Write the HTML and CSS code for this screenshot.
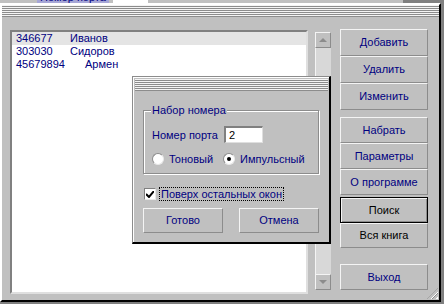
FILE: index.html
```html
<!DOCTYPE html>
<html lang="ru">
<head>
    <meta charset="UTF-8">
    <title>Телефонная книга</title>
    <link rel="stylesheet" href="styles.css">
</head>
<body>
    <div class="desk">
        <!-- кусочек окна на заднем плане -->
        <div class="behind">
            <span class="behind-label">Номер порта</span>
            <span class="behind-input"></span>
        </div>

        <div class="window">
            <div class="stripes"></div>
            <div class="client">
                <div class="listbox">
                    <div class="row sel"><span class="num">346677</span><span>Иванов</span></div>
                    <div class="row"><span class="num">303030</span><span>Сидоров</span></div>
                    <div class="row"><span class="num wide">45679894</span><span>Армен</span></div>
                </div>

                <div class="vscroll">
                    <div class="arrow"><span class="tri up"></span></div>
                    <div class="track"></div>
                    <div class="arrow"><span class="tri down"></span></div>
                </div>

                <div class="buttons">
                    <div class="group edit-group">
                        <div class="btn">Добавить</div>
                        <div class="btn">Удалить</div>
                        <div class="btn">Изменить</div>
                    </div>
                    <div class="group tools">
                        <div class="btn">Набрать</div>
                        <div class="btn">Параметры</div>
                        <div class="btn">О программе</div>
                    </div>
                    <div class="group find">
                        <div class="btn default black">Поиск</div>
                        <div class="btn black">Вся книга</div>
                    </div>
                    <div class="group exit">
                        <div class="btn">Выход</div>
                    </div>
                </div>
            </div>
            <div class="grip"></div>
        </div>

        <!-- диалог параметров -->
        <div class="dialog">
            <div class="stripes"></div>
            <div class="dlg-body">
                <fieldset class="groupbox">
                    <legend>Набор номера</legend>
                    <div class="port">
                        <span>Номер порта</span>
                        <span class="edit">2</span>
                    </div>
                    <div class="radios">
                        <span class="radio"><span class="circle"></span>Тоновый</span>
                        <span class="radio"><span class="circle on"></span>Импульсный</span>
                    </div>
                </fieldset>

                <div class="check">
                    <span class="box">
                        <svg width="8" height="7" viewBox="0 0 8 7"><path d="M0 3 L3 6 L8 0" stroke="#000" stroke-width="2" fill="none"/></svg>
                    </span>
                    <span class="focus">Поверх остальных окон</span>
                </div>

                <div class="dlg-buttons">
                    <div class="btn">Готово</div>
                    <div class="btn">Отмена</div>
                </div>
            </div>
        </div>
    </div>
</body>
</html>
```

FILE: styles.css
```css
body {
    margin: 0;
    padding: 0;
    background-color: #808080;
    font-family: "Liberation Sans", Arial, sans-serif;
    font-size: 11px;
    color: #000080;
}
.desk {
    position: relative;
    width: 444px;
    height: 304px;
    overflow: hidden;
}
.behind {
    height: 3px;
    width: 403px;
    background-color: #c0c0c0;
    position: relative;
    overflow: hidden;
}
.behind-label {
    position: absolute;
    left: 37px;
    top: -9px;
    background-color: #a6a6d6;
    padding: 0 3px;
    line-height: 12px;
}
.behind-input {
    position: absolute;
    left: 113px;
    top: 0;
    width: 35px;
    height: 3px;
    background-color: #fff;
}
.window {
    width: 437px;
    height: 295px;
    background-color: #c0c0c0;
    border-top: 2px solid #fff;
    border-left: 2px solid #fff;
    border-right: 2px solid #000;
    border-bottom: 2px solid #000;
    position: relative;
}
.stripes {
    height: 12px;
    background: repeating-linear-gradient(to bottom, #f4f4f4 0 1px, #8c8c8c 1px 2px);
}
.client {
    display: flex;
    align-items: flex-start;
    padding: 12px 0 0 8px;
}
.listbox {
    width: 294px;
    height: 260px;
    margin-top: 1px;
    background-color: #fff;
    border-top: 2px solid #808080;
    border-left: 2px solid #808080;
    border-right: 2px solid #dfdfdf;
    border-bottom: 2px solid #dfdfdf;
    color: #000080;
}
.row {
    height: 13px;
    line-height: 13px;
    padding-left: 4px;
    display: flex;
}
.row.sel {
    background-color: #e4e4e4;
}
.num {
    width: 54px;
}
.num.wide {
    width: 69px;
}
.vscroll {
    width: 16px;
    height: 258px;
    margin: 3px 0 0 7px;
    display: flex;
    flex-direction: column;
    background-color: #d8d8d8;
}
.arrow {
    height: 14px;
    background-color: #c0c0c0;
    border-top: 1px solid #f4f4f4;
    border-left: 1px solid #f4f4f4;
    border-right: 1px solid #8c8c8c;
    border-bottom: 1px solid #8c8c8c;
    display: flex;
    align-items: center;
    justify-content: center;
}
.track {
    flex: 1;
    border-left: 1px solid #f4f4f4;
}
.tri {
    width: 0;
    height: 0;
    border-left: 4px solid transparent;
    border-right: 4px solid transparent;
}
.tri.up {
    border-bottom: 4px solid #8c8c8c;
}
.tri.down {
    border-top: 4px solid #8c8c8c;
}
.buttons {
    margin-left: 9px;
    width: 88px;
    display: flex;
    flex-direction: column;
}
.group {
    display: flex;
    flex-direction: column;
}
.btn {
    height: 23px;
    line-height: 23px;
    text-align: center;
    background-color: #c0c0c0;
    border-top: 1px solid #f4f4f4;
    border-left: 1px solid #f4f4f4;
    border-right: 1px solid #8c8c8c;
    border-bottom: 1px solid #8c8c8c;
    color: #000080;
}
.edit-group .btn {
    height: 25px;
    line-height: 25px;
}
.tools {
    margin-top: 7px;
}
.tools .btn {
    height: 24px;
    line-height: 24px;
}
.find {
    margin-top: 2px;
}
.find .btn {
    height: 23px;
    line-height: 23px;
}
.exit {
    margin-top: 16px;
}
.exit .btn {
    height: 24px;
    line-height: 24px;
}
.btn.black {
    color: #000;
}
.btn.default {
    border: 1px solid #000;
    height: 24px;
    line-height: 24px;
    box-shadow: inset 1px 1px 0 #f4f4f4, inset -1px -1px 0 #8c8c8c;
}
.grip {
    position: absolute;
    right: 1px;
    bottom: 1px;
    width: 11px;
    height: 11px;
    background: repeating-linear-gradient(135deg, transparent 0 2px, #fff 2px 3px, #8c8c8c 3px 4px);
    clip-path: polygon(100% 0, 100% 100%, 0 100%);
}
.dialog {
    position: absolute;
    left: 132px;
    top: 76px;
    width: 196px;
    height: 163px;
    background-color: #c0c0c0;
    border-top: 1px solid #8c8c8c;
    border-left: 1px solid #8c8c8c;
    border-right: 2px solid #000;
    border-bottom: 2px solid #000;
    box-shadow: inset 1px 1px 0 #fff;
    padding-top: 2px;
}
.dialog .stripes {
    margin: 0 1px 0 2px;
}
.dlg-body {
    padding: 0 10px;
}
.groupbox {
    margin: 13px 0 0 0;
    padding: 9px 0 8px 8px;
    border: 1px solid #8c8c8c;
    box-shadow: inset 1px 1px 0 #fff, 1px 1px 0 #fff;
}
.groupbox legend {
    padding: 0 1px;
    margin-left: -1px;
    background-color: #c0c0c0;
    line-height: 13px;
}
.port {
    display: flex;
    align-items: center;
    gap: 6px;
}
.edit {
    width: 33px;
    height: 14px;
    line-height: 14px;
    padding-left: 3px;
    background-color: #fff;
    color: #000;
    border-top: 2px solid #808080;
    border-left: 2px solid #808080;
    border-right: 1px solid #dfdfdf;
    border-bottom: 1px solid #dfdfdf;
}
.radios {
    display: flex;
    gap: 10px;
    margin-top: 10px;
}
.radio {
    display: flex;
    align-items: center;
    gap: 5px;
}
.circle {
    width: 10px;
    height: 10px;
    border-radius: 50%;
    background-color: #fff;
    border: 1px solid #8c8c8c;
    border-right-color: #e8e8e8;
    border-bottom-color: #e8e8e8;
    position: relative;
}
.circle.on::after {
    content: "";
    position: absolute;
    left: 3px;
    top: 3px;
    width: 4px;
    height: 4px;
    border-radius: 50%;
    background-color: #000;
}
.check {
    display: flex;
    align-items: center;
    gap: 3px;
    margin-top: 13px;
    margin-left: 1px;
}
.box {
    width: 10px;
    height: 10px;
    background-color: #fff;
    border-top: 1px solid #808080;
    border-left: 1px solid #808080;
    border-right: 1px solid #e8e8e8;
    border-bottom: 1px solid #e8e8e8;
    display: flex;
    align-items: center;
    justify-content: center;
}
.focus {
    border: 1px dotted #000;
    padding: 0 1px;
    line-height: 12px;
}
.dlg-buttons {
    display: flex;
    justify-content: space-between;
    margin-top: 7px;
}
.dlg-buttons .btn {
    width: 78px;
}
```
